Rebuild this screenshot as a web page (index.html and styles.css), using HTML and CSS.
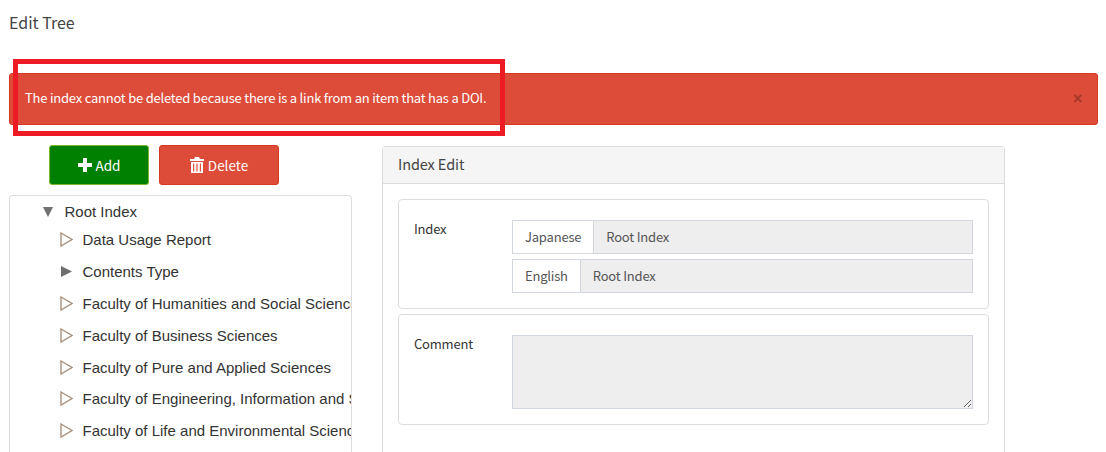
FILE: index.html
```html
<!DOCTYPE html>
<html lang="en">
<head>
    <meta charset="UTF-8">
    <title>Edit Tree</title>
    <link rel="stylesheet" href="styles.css">
</head>
<body>
    <h1 class="page-title">Edit Tree</h1>

    <div class="alert">
        <span class="alert-text">The index cannot be deleted because there is a link from an item that has a DOI.</span>
        <span class="alert-close">×</span>
    </div>
    <div class="annotation"></div>

    <div class="columns">
        <div class="left-col">
            <div class="btn-row">
                <button class="btn btn-add">
                    <svg class="icon" width="14" height="14" viewBox="0 0 14 14"><path d="M5 0h4v5h5v4H9v5H5V9H0V5h5z" fill="#fff"/></svg>
                    Add
                </button>
                <button class="btn btn-delete">
                    <svg class="icon" width="14" height="16" viewBox="0 0 14 16"><path d="M5 0h4l1 2h4v2H0V2h4zM1 5h12v11H1zM3 6.500v8h1.200v-8zM6.400 6.500v8h1.200v-8zM9.800 6.500v8H11v-8z" fill="#fff" fill-rule="evenodd"/></svg>
                    Delete
                </button>
            </div>
            <div class="tree">
                <div class="tree-root">
                    <svg class="arrow" width="12" height="12" viewBox="0 0 12 12"><path d="M1 1h10L6 11z" fill="#6f6f6f"/></svg>
                    Root Index
                </div>
                <div class="tree-item">
                    <svg class="arrow" width="13" height="15" viewBox="0 0 13 15"><path d="M1 1l11 6.500L1 14z" fill="none" stroke="#a8917f" stroke-width="1.400"/></svg>
                    Data Usage Report
                </div>
                <div class="tree-item">
                    <svg class="arrow" width="13" height="15" viewBox="0 0 13 15"><path d="M1 2l11 5.500L1 13z" fill="#6f6f6f"/></svg>
                    Contents Type
                </div>
                <div class="tree-item">
                    <svg class="arrow" width="13" height="15" viewBox="0 0 13 15"><path d="M1 1l11 6.500L1 14z" fill="none" stroke="#a8917f" stroke-width="1.400"/></svg>
                    Faculty of Humanities and Social Sciences
                </div>
                <div class="tree-item">
                    <svg class="arrow" width="13" height="15" viewBox="0 0 13 15"><path d="M1 1l11 6.500L1 14z" fill="none" stroke="#a8917f" stroke-width="1.400"/></svg>
                    Faculty of Business Sciences
                </div>
                <div class="tree-item">
                    <svg class="arrow" width="13" height="15" viewBox="0 0 13 15"><path d="M1 1l11 6.500L1 14z" fill="none" stroke="#a8917f" stroke-width="1.400"/></svg>
                    Faculty of Pure and Applied Sciences
                </div>
                <div class="tree-item">
                    <svg class="arrow" width="13" height="15" viewBox="0 0 13 15"><path d="M1 1l11 6.500L1 14z" fill="none" stroke="#a8917f" stroke-width="1.400"/></svg>
                    Faculty of Engineering, Information and Systems
                </div>
                <div class="tree-item">
                    <svg class="arrow" width="13" height="15" viewBox="0 0 13 15"><path d="M1 1l11 6.500L1 14z" fill="none" stroke="#a8917f" stroke-width="1.400"/></svg>
                    Faculty of Life and Environmental Sciences
                </div>
            </div>
        </div>

        <div class="panel">
            <div class="panel-heading">Index Edit</div>
            <div class="panel-body">
                <div class="card">
                    <label class="card-label">Index</label>
                    <div class="card-fields">
                        <div class="input-group">
                            <span class="addon">Japanese</span>
                            <span class="field">Root Index</span>
                        </div>
                        <div class="input-group">
                            <span class="addon">English</span>
                            <span class="field">Root Index</span>
                        </div>
                    </div>
                </div>
                <div class="card">
                    <label class="card-label">Comment</label>
                    <div class="card-fields">
                        <textarea class="comment" disabled></textarea>
                    </div>
                </div>
            </div>
        </div>
    </div>
</body>
</html>
```

FILE: styles.css
```css
html, body {
    height: 452px;
    overflow: hidden;
}
body {
    font-family: "Noto Sans CJK JP", "Liberation Sans", sans-serif;
    font-size: 14px;
    color: #333;
    background-color: #fff;
    margin: 0;
    padding: 0 8px 0 9px;
    position: relative;
}
.page-title {
    font-size: 16px;
    font-weight: 400;
    line-height: 22px;
    color: #444;
    margin: 0;
    padding-top: 11px;
    height: 73px;
    box-sizing: border-box;
}
.alert {
    display: flex;
    justify-content: space-between;
    align-items: center;
    height: 52px;
    box-sizing: border-box;
    padding: 0 15px;
    background-color: #dd4b39;
    border: 1px solid #d73925;
    border-radius: 3px;
    color: #fff;
    font-size: 13px;
    letter-spacing: -.22px;
}
.alert-text {
    margin-bottom: 3px;
}
.alert-close {
    font-family: "Liberation Sans", Arial, sans-serif;
    font-size: 16px;
    font-weight: 700;
    color: #000;
    opacity: .25;
}
.annotation {
    position: absolute;
    left: 13px;
    top: 59px;
    width: 492px;
    height: 77px;
    box-sizing: border-box;
    border: 5px solid #ed1c24;
}
.columns {
    display: flex;
    align-items: flex-start;
    margin-top: 20px;
}
.left-col {
    width: 343px;
    margin-right: 30px;
}
.btn-row {
    display: flex;
    gap: 10px;
    padding-left: 40px;
    margin-bottom: 10px;
}
.btn {
    display: flex;
    justify-content: center;
    align-items: center;
    gap: 4px;
    height: 40px;
    padding: 0;
    font-family: inherit;
    font-size: 13.500px;
    color: #fff;
    border-radius: 3px;
}
.btn-add {
    width: 100px;
    background-color: #008000;
    border: 1px solid #7cb82f;
}
.btn-delete {
    width: 120px;
    background-color: #dd4b39;
    border: 1px solid #d73925;
}
.tree {
    height: 257px;
    overflow: hidden;
    border: 1px solid #ddd;
    border-bottom: none;
    border-radius: 4px 4px 0 0;
    box-sizing: border-box;
    font-family: "Liberation Sans", Arial, sans-serif;
    font-size: 15px;
    color: #333;
    white-space: nowrap;
}
.tree-root, .tree-item {
    display: flex;
    align-items: center;
    height: 31.800px;
}
.tree-root {
    height: 31px;
    padding-left: 32px;
    margin-bottom: -3px;
}
.tree-root .arrow {
    margin-right: 10.500px;
}
.tree-item {
    padding-left: 50px;
}
.tree-item .arrow {
    margin-right: 9.500px;
    flex-shrink: 0;
}
.panel {
    width: 623px;
    height: 306px;
    margin-top: 1px;
    border: 1px solid #ddd;
    border-bottom: none;
    border-radius: 4px 4px 0 0;
    box-sizing: border-box;
}
.panel-heading {
    height: 37px;
    box-sizing: border-box;
    padding: 7px 15px;
    font-size: 14.500px;
    letter-spacing: -.1px;
    line-height: 20px;
    color: #444;
    background-color: #f5f5f5;
    border-bottom: 1px solid #ddd;
}
.panel-body {
    padding: 15px 15px 0;
}
.card {
    display: flex;
    margin-bottom: 5px;
    padding: 20px 15px 15px;
    border: 1px solid #ddd;
    border-radius: 4px;
}
.card-label {
    width: 98px;
    flex-shrink: 0;
    font-size: 13px;
    letter-spacing: -.2px;
    line-height: 18px;
}
.card-fields {
    flex: 1;
}
.input-group {
    display: flex;
    height: 34px;
    box-sizing: border-box;
    font-size: 13px;
    letter-spacing: -.2px;
    line-height: 32px;
    border: 1px solid #d2d6de;
}
.input-group + .input-group {
    margin-top: 5px;
}
.addon {
    padding: 0 12px;
    background-color: #fff;
    color: #555;
    border-right: 1px solid #d2d6de;
}
.field {
    flex: 1;
    padding: 0 12px;
    background-color: #eee;
    color: #555;
}
.comment {
    display: block;
    width: 100%;
    height: 74px;
    box-sizing: border-box;
    margin: 0;
    background-color: #eee;
    border: 1px solid #d2d6de;
}
```
